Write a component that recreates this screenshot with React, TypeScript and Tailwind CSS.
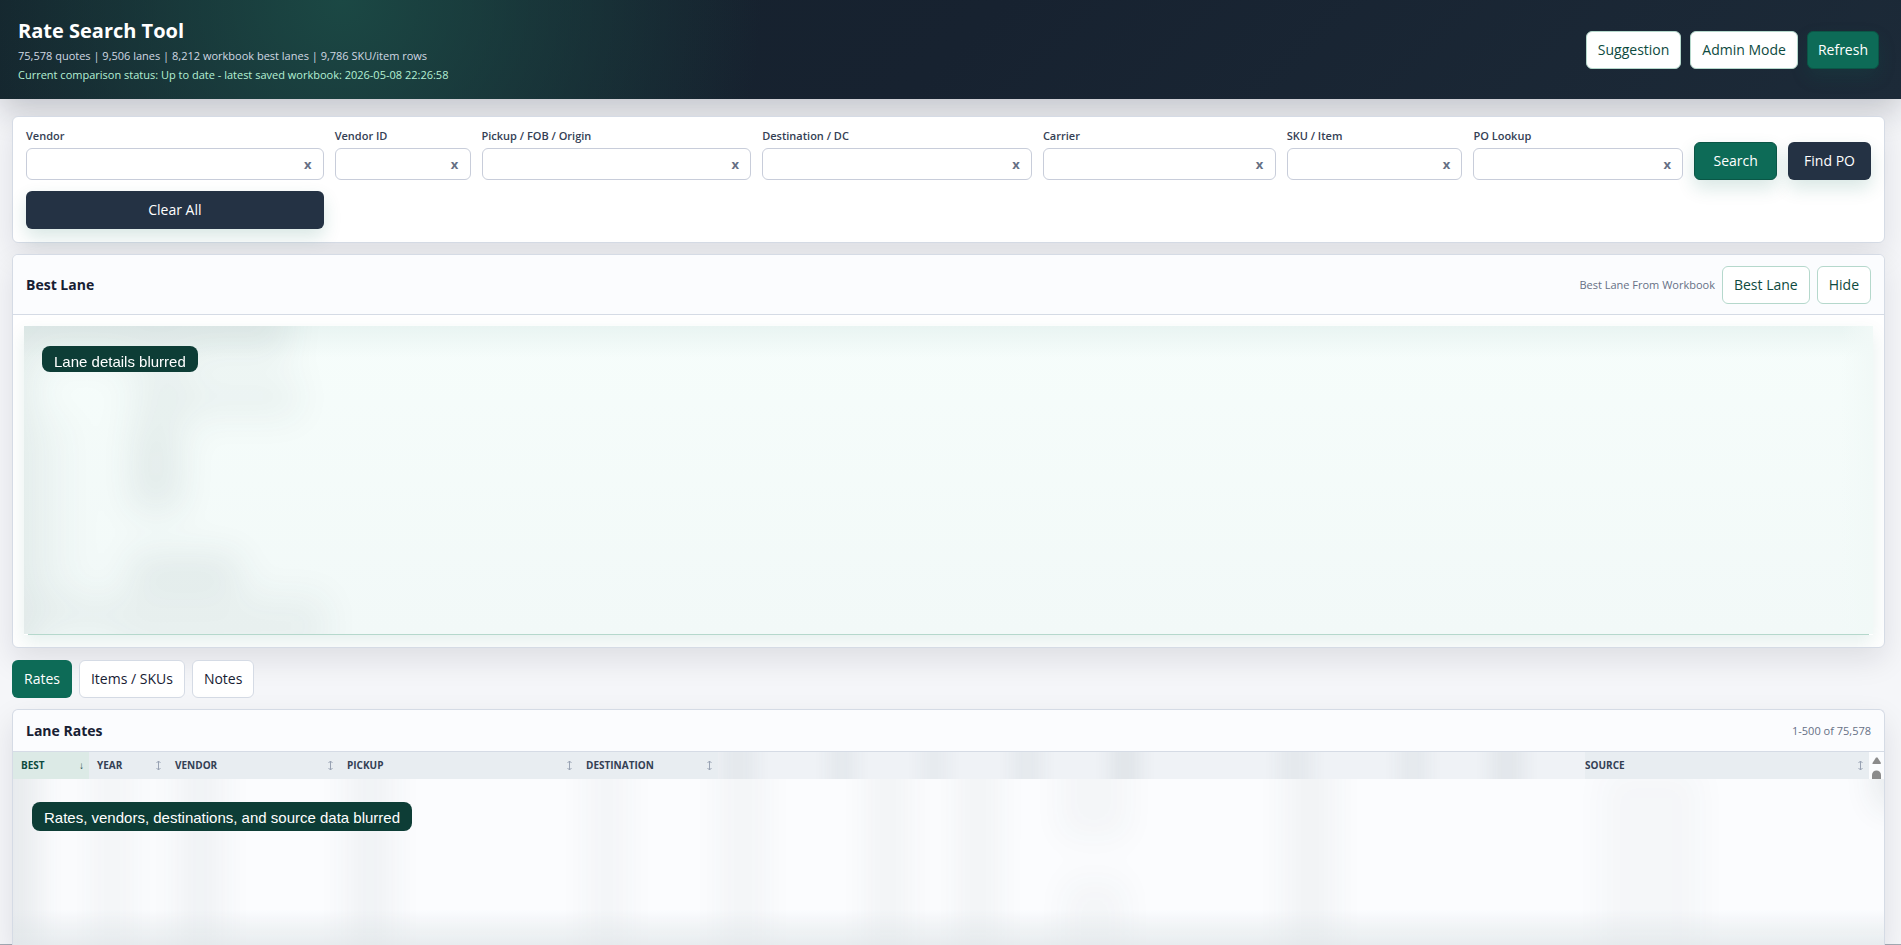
import { useId } from "react";
import type { ReactNode } from "react";

type Smudge = { x: number; y: number; w: number; h: number; o: number };

const FIELDS = [
  { id: "vendor", label: "Vendor" },
  { id: "vendor-id", label: "Vendor ID" },
  { id: "pickup", label: "Pickup / FOB / Origin" },
  { id: "destination", label: "Destination / DC" },
  { id: "carrier", label: "Carrier" },
  { id: "sku", label: "SKU / Item" },
  { id: "po", label: "PO Lookup" },
];

const COLUMNS = [
  { label: "Year", width: "w-[78px]" },
  { label: "Vendor", width: "w-[172px]" },
  { label: "Pickup", width: "w-[239px]" },
  { label: "Destination", width: "w-[140px]" },
];

// opacities are on a 0-1 scale, the whole layer is faded afterwards
const LANE_SMUDGES: Smudge[] = [
  { x: -40, y: -40, w: 306, h: 72, o: 0.75 },
  { x: 120, y: 52, w: 156, h: 40, o: 0.55 },
  { x: 105, y: 20, w: 60, h: 70, o: 0.4 },
  { x: 106, y: 95, w: 52, h: 90, o: 0.8 },
  { x: 106, y: 228, w: 110, h: 38, o: 0.8 },
  { x: 0, y: 90, w: 50, h: 190, o: 0.3 },
  { x: -40, y: 20, w: 50, h: 320, o: 0.8 },
  { x: -40, y: 272, w: 145, h: 34, o: 0.6 },
  { x: 100, y: 268, w: 204, h: 64, o: 0.5 },
];

const RATE_SMUDGES: Smudge[] = [
  { x: -40, y: -60, w: 66, h: 300, o: 0.9 },
  { x: 78, y: -60, w: 42, h: 300, o: 0.4 },
  { x: 163, y: -60, w: 48, h: 300, o: 0.5 },
  { x: 333, y: -60, w: 48, h: 300, o: 0.5 },
  { x: 574, y: -60, w: 40, h: 300, o: 0.4 },
  { x: 708, y: -60, w: 44, h: 300, o: 0.4 },
  { x: 854, y: -60, w: 42, h: 300, o: 0.45 },
  { x: 944, y: -60, w: 42, h: 300, o: 0.45 },
  { x: 1046, y: -60, w: 70, h: 120, o: 0.35 },
  { x: 1050, y: 100, w: 64, h: 140, o: 0.35 },
  { x: 1271, y: -60, w: 52, h: 300, o: 0.45 },
  { x: 1588, y: -10, w: 100, h: 260, o: 0.3 },
  { x: 1862, y: -60, w: 60, h: 88, o: 1 },
];

const HEAD_SMUDGES: Smudge[] = [
  { x: 2, y: -40, w: 36, h: 110, o: 0.5 },
  { x: 110, y: -40, w: 28, h: 110, o: 0.5 },
  { x: 202, y: -40, w: 28, h: 110, o: 0.4 },
  { x: 294, y: -40, w: 30, h: 110, o: 0.5 },
  { x: 392, y: -40, w: 30, h: 110, o: 0.7 },
  { x: 560, y: -40, w: 34, h: 110, o: 0.5 },
  { x: 680, y: -40, w: 30, h: 110, o: 0.5 },
  { x: 772, y: -40, w: 34, h: 110, o: 0.6 },
];

function Smudges({ items, blur }: { items: Smudge[]; blur: number }) {
  const id = useId();
  return (
    <svg aria-hidden="true" className="absolute inset-0 h-full w-full opacity-10">
      <filter id={id} x="-10%" y="-50%" width="120%" height="200%" colorInterpolationFilters="sRGB">
        <feGaussianBlur stdDeviation={blur} />
      </filter>
      <g filter={`url(#${id})`} fill="#2c4348">
        {items.map((s, i) => (
          <rect key={i} x={s.x} y={s.y} width={s.w} height={s.h} opacity={s.o} />
        ))}
      </g>
    </svg>
  );
}

function SortIcon() {
  return (
    <svg
      aria-hidden="true"
      viewBox="0 0 7 11"
      className="h-[11px] w-[7px] fill-none stroke-[#98a2b3]"
    >
      <path d="M3.500 1 V10 M1.500 3 L3.500 1 L5.500 3 M1.500 8 L3.500 10 L5.500 8" />
    </svg>
  );
}

function OutlineButton({ children }: { children: ReactNode }) {
  return (
    <button type="button" className="h-[38px] rounded-md border border-[#b5d8cc] bg-white px-[11px] text-[#0d4a3e]">
      {children}
    </button>
  );
}

function SearchField({ id, label }: { id: string; label: string }) {
  return (
    <div className="flex min-w-0 flex-col gap-1">
      <label htmlFor={id} className="text-[11px] leading-4 font-semibold text-[#344054]">
        {label}
      </label>
      <div className="relative">
        <input
          id={id}
          type="text"
          className="block h-8 w-full rounded-md border border-[#c8cdda] bg-white pr-8 pl-2 outline-none"
        />
        <button
          type="button"
          aria-label={`Clear ${label}`}
          className="absolute inset-y-0 right-0 w-8 text-[13px] font-bold text-[#667085]"
        >
          x
        </button>
      </div>
    </div>
  );
}

export default function App() {
  return (
    <div className="min-h-screen overflow-hidden bg-[#f5f6f9] font-['Open_Sans','Noto_Sans',sans-serif] text-sm text-[#172033]">
      <header className="relative flex h-[99px] items-center justify-between bg-[radial-gradient(circle_at_18%_0%,#1b4844_0%,#1b484400_420px),linear-gradient(135deg,#14212b_0%,#172230_50%,#1c2a38_100%)] pr-[22px] pl-[18px] shadow-[0_12px_30px_rgba(16,24,40,0.22)]">
        <div>
          <h1 className="text-xl leading-[30px] font-bold text-white">Rate Search Tool</h1>
          <p className="text-[11px] leading-[19px] text-[#d0d8e2]">
            75,578 quotes | 9,506 lanes | 8,212 workbook best lanes | 9,786 SKU/item rows
          </p>
          <p className="text-[11px] leading-[19px] text-[#b4f0d4]">
            Current comparison status: Up to date - latest saved workbook: 2026-05-08 22:26:58
          </p>
        </div>
        <div className="flex gap-[9px]">
          <OutlineButton>Suggestion</OutlineButton>
          <OutlineButton>Admin Mode</OutlineButton>
          <button type="button" className="h-[38px] rounded-md border border-[#0a5646] bg-[#0d6b57] px-[10px] text-white shadow-[0_8px_18px_rgba(13,107,87,0.16)]">
            Refresh
          </button>
        </div>
      </header>

      <main className="border-b border-[#a4abb4] pt-[17px] pr-4 pl-3">
        <form className="relative mb-[11px] grid grid-cols-[298fr_136fr_270fr_270fr_233fr_176fr_210fr_83fr_83fr] items-end gap-[11px] rounded-md border border-[#d5dbe5] bg-white p-[13px] pt-[11px] shadow-[0_12px_30px_rgba(16,24,40,0.1)]">
          {FIELDS.map((f) => (
            <SearchField key={f.id} id={f.id} label={f.label} />
          ))}
          <button type="button" className="h-[38px] rounded-md border border-[#0a5646] bg-[#0d6b57] text-white shadow-[0_8px_18px_rgba(13,107,87,0.16)]">
            Search
          </button>
          <button type="button" className="h-[38px] rounded-md bg-[#243244] text-white shadow-[0_8px_18px_rgba(13,107,87,0.16)]">
            Find PO
          </button>
          <button type="button" className="h-[38px] rounded-md bg-[#243244] text-white shadow-[0_8px_18px_rgba(13,107,87,0.16)]">
            Clear All
          </button>
        </form>

        <section className="relative overflow-hidden rounded-md border border-[#d5dbe5] bg-white shadow-[0_12px_30px_rgba(16,24,40,0.1)]">
          <div className="flex h-[60px] items-center justify-between border-b border-[#d5dbe5] bg-[#fbfcfe] px-[13px]">
            <h2 className="text-sm font-bold">Best Lane</h2>
            <div className="flex items-center gap-[7px]">
              <span className="text-[11px] text-[#667085]">Best Lane From Workbook</span>
              <OutlineButton>Best Lane</OutlineButton>
              <OutlineButton>Hide</OutlineButton>
            </div>
          </div>
          <div className="px-[11px] pt-[11px] pb-3">
            <div className="shadow-[0_8px_18px_rgba(13,107,87,0.1)]">
              <div className="relative h-[308px] overflow-hidden bg-linear-to-b from-[#f6fdfb] to-[#f2f9f8]">
                <div className="absolute inset-x-0 top-0 h-8 bg-linear-to-b from-[#e9f4f2] to-transparent" />
                <div className="absolute inset-y-0 right-0 w-8 bg-linear-to-l from-[#f1f9f7] to-transparent" />
                <Smudges items={LANE_SMUDGES} blur={18} />
                <div className="relative pt-5 pl-[18px]">
                  <span className="inline-block h-[26px] rounded-lg bg-[#0d3d36] px-3 pt-[6px] font-['Liberation_Sans',sans-serif] text-[15px] leading-5 text-white">
                    Lane details blurred
                  </span>
                </div>
              </div>
              <div className="mx-1 h-px bg-[#b5d8cc]" />
            </div>
          </div>
        </section>

        <nav className="relative mt-3 mb-[11px] flex gap-[7px]">
          <button type="button" className="h-[38px] rounded-md bg-[#0d6b57] px-3 text-white">
            Rates
          </button>
          <button type="button" className="h-[38px] rounded-md border border-[#d5dbe5] bg-white px-[11px]">
            Items / SKUs
          </button>
          <button type="button" className="h-[38px] rounded-md border border-[#d5dbe5] bg-white px-[11px]">
            Notes
          </button>
        </nav>

        <section className="relative -mb-px overflow-hidden rounded-t-md border border-b-0 border-[#d5dbe5] bg-[#fbfcfe] shadow-[0_12px_30px_rgba(16,24,40,0.1)]">
          <div className="flex h-[42px] items-center justify-between border-b border-[#d5dbe5] px-[13px]">
            <h2 className="text-sm font-bold">Lane Rates</h2>
            <span className="text-[11px] text-[#667085]">1-500 of 75,578</span>
          </div>
          <div className="flex">
            <table className="w-full table-fixed border-collapse text-left text-[10px] text-[#344054] uppercase">
              <thead>
                <tr className="h-[27px] bg-[#e8edf1]">
                  <th className="w-[76px] bg-[#dceae6] pr-[5px] pl-2 font-bold text-[#0d4a3e]">
                    <span className="flex items-center justify-between">
                      Best <span aria-hidden="true">↓</span>
                    </span>
                  </th>
                  {COLUMNS.map((c) => (
                    <th key={c.label} className={`${c.width} pr-[5px] pl-2 font-bold`}>
                      <span className="flex items-center justify-between">
                        {c.label} <SortIcon />
                      </span>
                    </th>
                  ))}
                  <th aria-label="Hidden columns" className="relative overflow-hidden bg-[#eff2f6] p-0">
                    <Smudges items={HEAD_SMUDGES} blur={9} />
                  </th>
                  <th className="w-[284px] pr-[5px] font-bold">
                    <span className="flex items-center justify-between">
                      Source <SortIcon />
                    </span>
                  </th>
                </tr>
              </thead>
            </table>
            <svg aria-hidden="true" viewBox="0 0 15 27" className="h-[27px] w-[15px] shrink-0 fill-[#8b8b8b]">
              <path d="M7 5.500 L8.500 5.500 L12 11 Q12 12 11 12 L4 12 Q3 12 3.500 11 Z" />
              <path d="M3 27 V23 A4.500 4.500 0 0 1 12 23 V27 Z" />
            </svg>
          </div>
          <div className="relative h-[166px] overflow-hidden">
            <Smudges items={RATE_SMUDGES} blur={16} />
            <div className="absolute inset-x-0 bottom-0 h-9 bg-linear-to-b from-transparent to-[#dfe5e8]/70" />
            <div className="relative pt-[23px] pl-[19px]">
              <span className="inline-block h-[29px] rounded-lg bg-[#0d3d36] px-3 pt-[6px] font-['Liberation_Sans',sans-serif] text-[15px] leading-5 text-white">
                Rates, vendors, destinations, and source data blurred
              </span>
            </div>
          </div>
        </section>
      </main>
    </div>
  );
}
